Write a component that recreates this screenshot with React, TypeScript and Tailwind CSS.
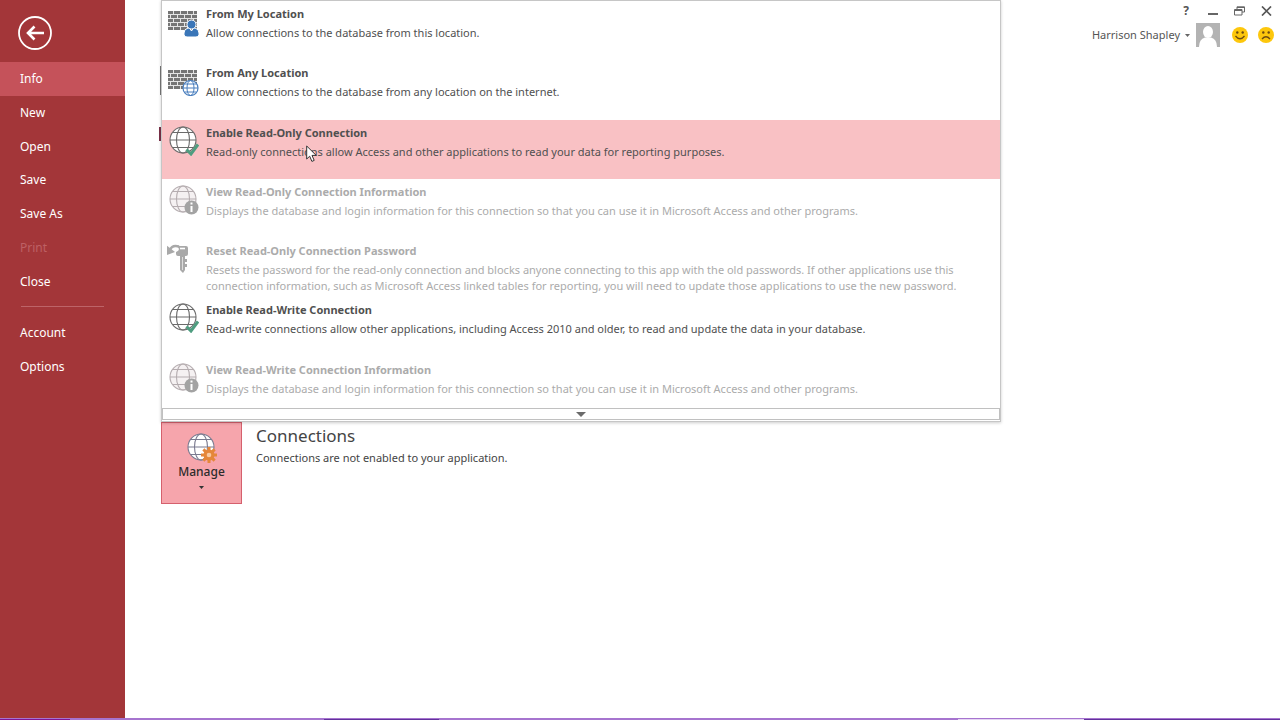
import React from 'react'

type IconName = 'wallUser' | 'wallGlobe' | 'check' | 'info' | 'key'

interface MenuItem {
  title: string
  text: string
  icon: IconName
  active?: boolean
  disabled?: boolean
}

const menuItems: MenuItem[] = [
  { title: 'From My Location', text: 'Allow connections to the database from this location.', icon: 'wallUser' },
  { title: 'From Any Location', text: 'Allow connections to the database from any location on the internet.', icon: 'wallGlobe' },
  {
    title: 'Enable Read-Only Connection',
    text: 'Read-only connections allow Access and other applications to read your data for reporting purposes.',
    icon: 'check',
    active: true,
  },
  {
    title: 'View Read-Only Connection Information',
    text: 'Displays the database and login information for this connection so that you can use it in Microsoft Access and other programs.',
    icon: 'info',
    disabled: true,
  },
  {
    title: 'Reset Read-Only Connection Password',
    text: 'Resets the password for the read-only connection and blocks anyone connecting to this app with the old passwords. If other applications use this connection information, such as Microsoft Access linked tables for reporting, you will need to update those applications to use the new password.',
    icon: 'key',
    disabled: true,
  },
  {
    title: 'Enable Read-Write Connection',
    text: 'Read-write connections allow other applications, including Access 2010 and older, to read and update the data in your database.',
    icon: 'check',
  },
  {
    title: 'View Read-Write Connection Information',
    text: 'Displays the database and login information for this connection so that you can use it in Microsoft Access and other programs.',
    icon: 'info',
    disabled: true,
  },
]

const navItems = ['Info', 'New', 'Open', 'Save', 'Save As', 'Print', 'Close']

// Globe with meridians, 27px across
function Globe({ stroke = '#6b6b6b', fill = '#fff' }: { stroke?: string; fill?: string }) {
  return (
    <g stroke={stroke} strokeWidth="1.1" fill="none">
      <circle cx="14" cy="14" r="13" fill={fill} />
      <ellipse cx="14" cy="14" rx="6.5" ry="13" />
      <path d="M1 14h26M3.5 6.5h21M3.5 21.5h21" />
    </g>
  )
}

function Wall() {
  const rows = [0, 4, 8, 12, 16]
  return (
    <g>
      <rect x="0" y="0" width="29" height="19" fill="#e4e4e4" />
      {rows.map((y, i) => (
        <path
          key={y}
          d={i % 2 === 0 ? 'M0 0h5M6 0h6M13 0h6M20 0h5M26 0h3' : 'M0 0h2M3 0h6M10 0h6M17 0h6M24 0h5'}
          transform={`translate(0 ${y + 1.5})`}
          stroke="#757575"
          strokeWidth="3"
        />
      ))}
    </g>
  )
}

function ItemIcon({ name }: { name: IconName }) {
  return (
    <svg width="32" height="32" viewBox="0 0 32 32" aria-hidden="true">
      {name === 'wallUser' && (
        <g transform="translate(1 6)">
          <Wall />
          <path d="M16 24v-2q0-4 4-5h1.500l2 3 2-3H27q4 1 4 5v2q-1 2-3 2h-9q-2 0-3-2z" fill="#3a76b8" stroke="#fff" />
          <circle cx="23.500" cy="13.500" r="4.500" fill="#3a76b8" stroke="#fff" />
        </g>
      )}
      {name === 'wallGlobe' && (
        <g transform="translate(1 6)">
          <Wall />
          <g stroke="#4a7fbe" fill="none">
            <circle cx="22.500" cy="18" r="7.500" fill="#fff" strokeWidth="1.200" />
            <ellipse cx="22.500" cy="18" rx="3.500" ry="7.500" />
            <path d="M15 18h15M16.500 14h12M16.500 22h12" />
          </g>
        </g>
      )}
      {name === 'check' && (
        <g transform="translate(2 2)">
          <Globe />
          <path d="M17.500 23.500l4.500 4.500 7-9.500" stroke="#4f9d80" strokeWidth="3" fill="none" />
        </g>
      )}
      {name === 'info' && (
        <g transform="translate(2 2)">
          <Globe stroke="#b5adb0" fill="#f5f1f2" />
          <circle cx="22.500" cy="22.500" r="7" fill="#a3a3a3" />
          <path d="M22.500 21v6M22.500 17.500v2" stroke="#fff" strokeWidth="2" fill="none" />
        </g>
      )}
      {name === 'key' && (
        <g transform="translate(-1 1)">
          <path d="M4 7Q6 1.500 13 3.500" stroke="#a9a9a9" strokeWidth="2.500" fill="none" />
          <path d="M0 2l1 10 8-3z" fill="#a9a9a9" />
          <path d="M11 3h9q2 0 2 2v6q0 2-2 2h-1v14l-2 3-3-3V13h-2q-2 0-2-2V9q3-1 3-3z" fill="#a9a9a9" />
          <path d="M14 5.500h5" stroke="#fff" strokeWidth="1.600" />
          <path d="M16.500 14v13" stroke="#ddd" strokeWidth="1" />
          <path d="M19 16h2v3h-2zM19 21h2v3h-2z" fill="#a9a9a9" />
        </g>
      )}
    </svg>
  )
}

function Sidebar() {
  return (
    <nav className="w-[125px] shrink-0 bg-[#a33639] text-white text-[12px]">
      <div className="h-[62px] pl-[18px] pt-4">
        <button aria-label="Back" className="block rounded-full">
          <svg width="34" height="34" viewBox="0 0 34 34" fill="none" stroke="#fff">
            <circle cx="17" cy="17" r="16" strokeWidth="1.800" />
            <path d="M26 17H10M16.500 10.500L10 17l6.500 6.500" strokeWidth="2.600" />
          </svg>
        </button>
      </div>
      <div className="grid h-[236px] auto-rows-fr">
        {navItems.map((item) => (
          <button
            key={item}
            disabled={item === 'Print'}
            className={`pl-5 pt-px text-left ${item === 'Info' ? 'bg-[#c5525a]' : ''} ${item === 'Print' ? 'text-[#bd6064]' : ''}`}
          >
            {item}
          </button>
        ))}
      </div>
      <hr className="mx-[21px] mt-2 mb-2 border-[#bd6468]" />
      <button className="block h-[34px] w-full pl-5 pt-px text-left">Account</button>
      <button className="block h-[34px] w-full pl-5 pt-px text-left">Options</button>
    </nav>
  )
}

function Smiley({ sad }: { sad?: boolean }) {
  return (
    <svg width="16" height="16" viewBox="0 0 16 16" aria-hidden="true">
      <circle cx="8" cy="8" r="8" fill="#fdc70c" />
      <circle cx="5.300" cy="5.500" r="1.200" fill="#6b4a10" />
      <circle cx="10.700" cy="5.500" r="1.200" fill="#6b4a10" />
      <path d={sad ? 'M4 12Q8 7.500 12 12' : 'M3.500 9Q8 14.500 12.500 9'} stroke="#6b4a10" strokeWidth="1.300" fill="none" />
    </svg>
  )
}

function AccountBar() {
  return (
    <header className="ml-auto shrink-0 text-[#555]">
      <div className="flex h-[21px] items-center justify-end gap-4 pr-2">
        <button aria-label="Help" className="w-3 text-[12px] font-bold">?</button>
        <button aria-label="Minimize">
          <svg width="10" height="10" viewBox="0 0 10 10"><path d="M0 8h10" stroke="#666" strokeWidth="2" /></svg>
        </button>
        <button aria-label="Restore">
          <svg width="11" height="10" viewBox="0 0 11 10" fill="none" stroke="#666">
            <path d="M3 3V.8h7.500V6H8M3 1.500h7" />
            <path d="M.5 3.500H8v5.500H.5zM.5 4.500H8" />
          </svg>
        </button>
        <button aria-label="Close">
          <svg width="11" height="10" viewBox="0 0 11 10"><path d="M1 .5l9 9M10 .5l-9 9" stroke="#555" strokeWidth="1.700" /></svg>
        </button>
      </div>
      <div className="flex h-7 items-center justify-end pr-[6px]">
        <button className="flex items-center gap-[5px] text-[11px]">
          Harrison Shapley
          <svg width="5" height="3" viewBox="0 0 5 3"><path d="M0 0h5L2.500 3z" fill="#666" /></svg>
        </button>
        <svg className="ml-[6px] mr-3" width="24" height="24" viewBox="0 0 24 24" aria-hidden="true">
          <path d="M0 0h24v24H0z" fill="#b3b3b3" />
          <ellipse cx="12" cy="9" rx="5" ry="6" fill="#fff" />
          <path d="M3 24q0-8 6-9.500h6q6 1.500 6 9.500z" fill="#fff" />
        </svg>
        <div className="flex gap-[10px]">
          <button aria-label="Send a smile"><Smiley /></button>
          <button aria-label="Send a frown"><Smiley sad /></button>
        </div>
      </div>
    </header>
  )
}

function ConnectionMenu() {
  return (
    <div className="relative z-10 border border-[#c6c6c6] bg-white pb-px shadow-[0_1px_3px_rgba(0,0,0,0.2)]">
      <div className="h-[407px] overflow-hidden">
        <ul className="grid h-[415px] auto-rows-fr">
          {menuItems.map((item) => (
            <li key={item.title} className="min-h-0">
              <button
                disabled={item.disabled}
                className={`flex h-full w-full items-start pl-[5px] text-left ${item.active ? 'bg-[#f9c1c4]' : ''} ${
                  item.disabled ? 'text-[#ababab]' : 'text-[#505050]'
                }`}
              >
                <span className="w-[39px] shrink-0 pt-1"><ItemIcon name={item.icon} /></span>
                <span className="min-w-0 pr-5">
                  <span className="block pt-[5px] text-[11px] leading-4 font-bold">{item.title}</span>
                  <span className="mt-[3px] block text-[11px] leading-4">{item.text}</span>
                </span>
              </button>
            </li>
          ))}
        </ul>
      </div>
      <button aria-label="Scroll down" className="flex h-3 w-full items-center justify-center border border-[#c0c0c0]">
        <svg width="10" height="5" viewBox="0 0 10 5"><path d="M0 0h10L5 5z" fill="#6b6b6b" /></svg>
      </button>
      {/* mouse pointer */}
      <svg className="absolute top-[144px] left-[144px]" width="12" height="18" viewBox="0 0 12 18" aria-hidden="true">
        <path d="M.7 1v13l3-2.800 2.200 5.200 2.300-1-2.200-5h4.200z" fill="#fff" stroke="#333" />
      </svg>
    </div>
  )
}

function ManageIcon() {
  return (
    <svg width="32" height="31" viewBox="0 0 32 31" aria-hidden="true">
      <g transform="translate(1 0)">
        <Globe stroke="#7b7b90" />
      </g>
      <g transform="translate(23 22)">
        <path
          d="M-1.500-8h3v16h-3zM-8-1.500H8v3H-8zM-6.700-4.600l2.100-2.100L6.700 4.600 4.600 6.700zM4.600-6.700l2.100 2.100L-4.600 6.700-6.700 4.600z"
          fill="#e5873a"
        />
        <circle r="5.500" fill="#e5873a" />
        <circle r="2.300" fill="#f9c9a0" />
      </g>
    </svg>
  )
}

export default function App() {
  return (
    <div className="flex h-screen flex-col overflow-hidden bg-white font-['Noto_Sans','Open_Sans',sans-serif]">
      <div className="flex min-h-0 flex-1">
        <Sidebar />
        <main className="relative ml-9 w-full max-w-[840px]">
          {/* edges of the page heading left uncovered by the menu */}
          <span className="absolute top-[66px] -left-px h-[29px] w-px bg-[#777]" />
          <span className="absolute top-[127px] -left-[2px] h-[14px] w-[2px] bg-[#7a3048]" />
          <ConnectionMenu />
          <section className="flex text-[#444]">
            <button className="flex h-[82px] w-[81px] flex-col items-center border border-[#d5606d] bg-[#f6a5ac] pt-[10px] text-[12px] text-[#2b2b2b]">
              <ManageIcon />
              <span className="leading-4 font-medium">Manage</span>
              <svg className="mt-[6px]" width="5" height="3" viewBox="0 0 5 3"><path d="M0 0h5L2.500 3z" fill="#333" /></svg>
            </button>
            <div className="pl-[14px] pt-[2px]">
              <h2 className="text-[17px] leading-6">Connections</h2>
              <p className="mt-[2px] text-[11px] leading-4">Connections are not enabled to your application.</p>
            </div>
          </section>
        </main>
        <AccountBar />
      </div>
      {/* top edge of the taskbar */}
      <div className="flex h-[2px] shrink-0 border-t border-[#a674cf] bg-[#a674cf]">
        <span className="w-[70px] bg-[#7d1596]" />
        <span className="ml-[254px] w-[115px] bg-[#62319c]" />
        <span className="ml-[519px] w-[126px] bg-[#e5d5f3]" />
        <span className="flex-1 bg-[#62319c]" />
      </div>
    </div>
  )
}
